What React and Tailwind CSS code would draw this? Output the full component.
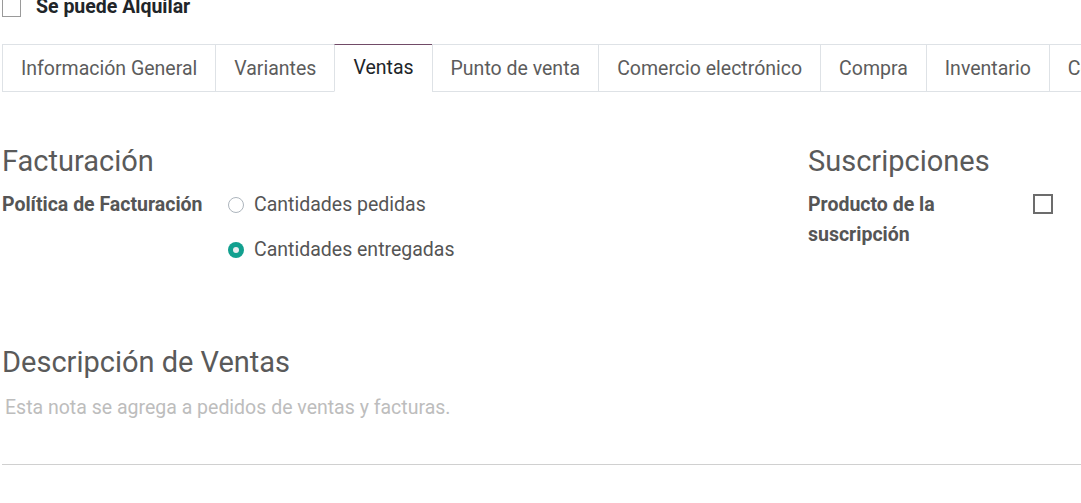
import React, { useState } from 'react';

const tabs = [
  'Información General',
  'Variantes',
  'Ventas',
  'Punto de venta',
  'Comercio electrónico',
  'Compra',
  'Inventario',
  'Contabilidad',
];

const App = () => {
  const [activeTab, setActiveTab] = useState('Ventas');
  const [policy, setPolicy] = useState('delivered');
  const [rentable, setRentable] = useState(false);
  const [subscription, setSubscription] = useState(false);

  return (
    <div className="w-[1081px] h-[503px] overflow-hidden bg-white font-['Roboto',sans-serif] text-[19.5px]">
      {/* Rental checkbox */}
      <label className="flex items-center h-[22px] -mt-[4px] pl-[2px] cursor-pointer">
        <input
          type="checkbox"
          checked={rentable}
          onChange={() => setRentable(!rentable)}
          className="appearance-none w-[19px] h-[19px] border border-[#9a9a9a] bg-white"
        />
        <span className="ml-[15px] font-bold text-[#212529] leading-[22px]">Se puede Alquilar</span>
      </label>

      {/* Notebook tabs */}
      <div className="mt-[26px] ml-[2px] flex border-b border-[#dee2e6] whitespace-nowrap">
        {tabs.map((tab) => (
          <button
            key={tab}
            onClick={() => setActiveTab(tab)}
            className={`shrink-0 h-[48px] -mb-px pl-[18px] pr-[18px] border-l border-t text-[19.5px] ${
              activeTab === tab
                ? 'border-t-[#714b67] border-l-[#dee2e6] border-b border-b-white bg-white text-[#212529]'
                : 'border-[#dee2e6] text-[#5c5c5c]'
            }`}
          >
            {tab}
          </button>
        ))}
      </div>

      {/* Sales tab content */}
      <div className="pl-[2px] pt-[51px]">
        <div className="flex">
          <div className="w-[806px]">
            <h2 className="text-[29px] leading-[36px] text-[#5a5a5a] font-normal">Facturación</h2>
            <div className="flex mt-[11px]">
              <div className="w-[226px] font-bold text-[#555] leading-[30px]">Política de Facturación</div>
              <div className="flex flex-col gap-[15px] text-[#555] leading-[30px]">
                <label className="flex items-center cursor-pointer" onClick={() => setPolicy('ordered')}>
                  <span
                    className={`w-[16px] h-[16px] rounded-full flex items-center justify-center ${
                      policy === 'ordered' ? 'bg-[#12a08f]' : 'border border-[#adb5bd]'
                    }`}
                  >
                    {policy === 'ordered' && <span className="w-[6px] h-[6px] rounded-full bg-[#e9ecef]" />}
                  </span>
                  <span className="ml-[10px]">Cantidades pedidas</span>
                </label>
                <label className="flex items-center cursor-pointer" onClick={() => setPolicy('delivered')}>
                  <span
                    className={`w-[16px] h-[16px] rounded-full flex items-center justify-center ${
                      policy === 'delivered' ? 'bg-[#12a08f]' : 'border border-[#adb5bd]'
                    }`}
                  >
                    {policy === 'delivered' && <span className="w-[6px] h-[6px] rounded-full bg-[#e9ecef]" />}
                  </span>
                  <span className="ml-[10px]">Cantidades entregadas</span>
                </label>
              </div>
            </div>
          </div>

          <div className="flex-1">
            <h2 className="text-[29px] leading-[36px] text-[#5a5a5a] font-normal">Suscripciones</h2>
            <div className="flex mt-[11px]">
              <div className="w-[225px] pr-[60px] font-bold text-[#555] leading-[30px]">Producto de la suscripción</div>
              <div className="pt-[4px]">
                <input
                  type="checkbox"
                  checked={subscription}
                  onChange={() => setSubscription(!subscription)}
                  className="appearance-none block w-[20px] h-[20px] border-2 border-[#6c6c6c] bg-white"
                />
              </div>
            </div>
          </div>
        </div>

        <h2 className="mt-[79px] text-[29px] leading-[36px] text-[#5a5a5a] font-normal">Descripción de Ventas</h2>
        <div className="mt-[16px] pl-[3px] pb-[44px] border-b border-[#d0d0d0] text-[#bdbdbd] leading-[24px]">
          Esta nota se agrega a pedidos de ventas y facturas.
        </div>
      </div>
    </div>
  );
};

export default App;
